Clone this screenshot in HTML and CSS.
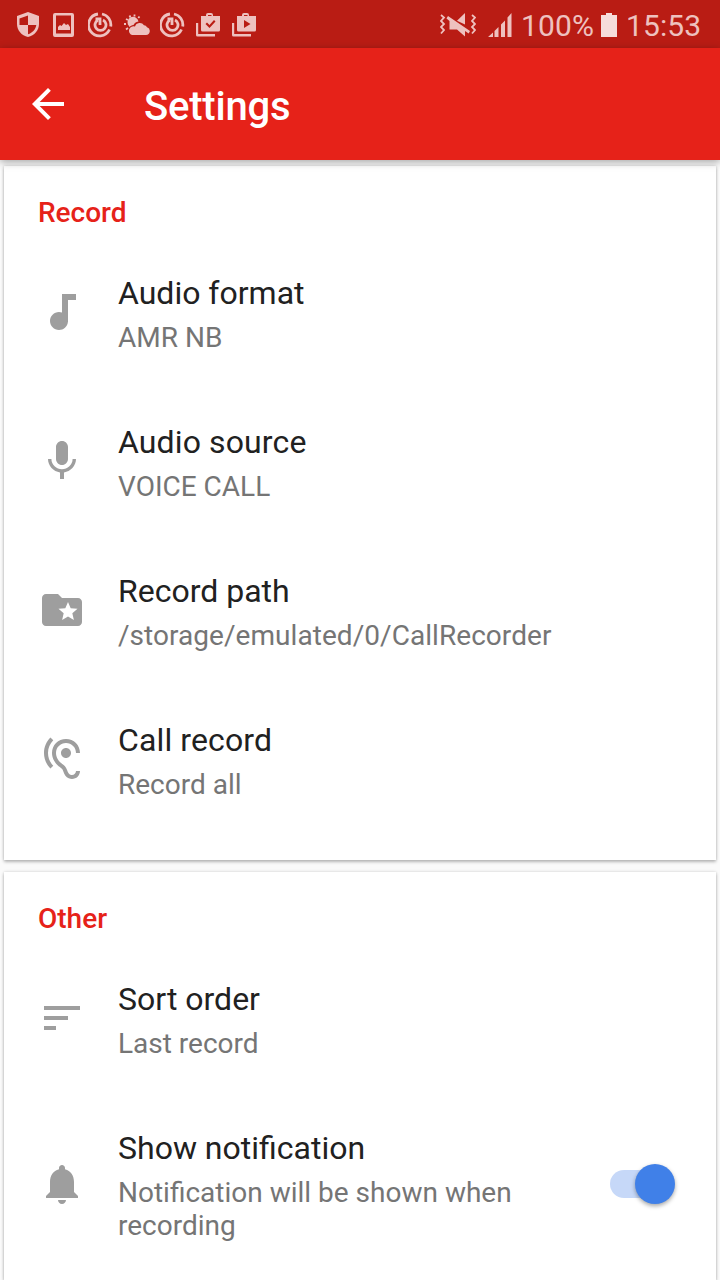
FILE: index.html
```html
<!DOCTYPE html>
<html lang="en">
<head>
<meta charset="utf-8">
<title>Settings</title>
<link rel="stylesheet" href="styles.css">
</head>
<body>
<div class="status">
  <div class="status-left">
    <svg width="26" height="28" viewBox="-1 0 26 28"><path fill-rule="evenodd" d="M11 1L22 5v8c0 6.300-4.500 11.500-11 13C4.500 24.500 0 19.300 0 13V5zM11 4.500L2.500 7.500V14H11zM11 14v9.300c4.500-1.400 7.700-5 8.300-9.300z"/></svg>
    <svg width="26" height="28" viewBox="0 0 26 28"><path fill-rule="evenodd" d="M3 2h17a2 2 0 0 1 2 2v20a2 2 0 0 1-2 2H3a2 2 0 0 1-2-2V4a2 2 0 0 1 2-2zM4 4.500v18h15v-18zM6 19v-3l2-2 1.500 1 2.500-3 2 2 2-1 2 3v3z"/></svg>
    <svg width="26" height="28" viewBox="1 0 26 28"><g class="line"><path d="M15 3a11 11 0 0 1 8.700 12.600M22.500 18.500A11 11 0 1 1 11 3M16 9a5.500 5.500 0 1 1-5 0"/><path d="M8.500 7.800h4.500v6.200"/></g></svg>
    <svg width="26" height="28" viewBox="1 0 26 28"><path d="M9 24h14a4 4 0 0 0 1-7.800 3.500 3.500 0 0 0-3-2A5 5 0 0 0 12 15.500 4.300 4.300 0 0 0 9 24z"/><path d="M6 15A5.500 5.500 0 1 1 15.500 10.500C12.500 11 11.500 12 10.500 14 8.500 14 7.500 15 6.500 16z"/><path class="ray" d="M3 8l2 1M6.500 4.500l1 2M11.500 3.500v2M16.500 5.500l-1.200 1.500M1 13h2M3 18.500l2-1.500"/></svg>
    <svg width="26" height="28" viewBox="1 0 26 28"><g class="line"><path d="M15 3a11 11 0 0 1 8.700 12.600M22.500 18.500A11 11 0 1 1 11 3M16 9a5.500 5.500 0 1 1-5 0"/><path d="M8.500 7.800h4.500v6.200"/></g></svg>
    <svg width="26" height="28" viewBox="0 -1 26 28"><path fill-rule="evenodd" d="M5 4h5V3a2 2 0 0 1 2-2h3a2 2 0 0 1 2 2v1h7v14a1.500 1.500 0 0 1-1.500 1.500h-16A1.500 1.500 0 0 1 5 18zM12 3v1h3.500V3zM11 10.500L9.500 12l4 4 6-6.500L18 8l-4.500 5z"/><path d="M0 11h2.200v11H19v2.500H1.500A1.500 1.500 0 0 1 0 23z"/></svg>
    <svg width="26" height="28" viewBox="0 -1 26 28"><path fill-rule="evenodd" d="M5 4h5V3a2 2 0 0 1 2-2h3a2 2 0 0 1 2 2v1h7v14a1.500 1.500 0 0 1-1.500 1.500h-16A1.500 1.500 0 0 1 5 18zM12 3v1h3.500V3zM12 8v8l6.500-4z"/><path d="M0 11h2.200v11H19v2.500H1.500A1.500 1.500 0 0 1 0 23z"/></svg>
  </div>
  <div class="status-right">
    <svg class="mute" width="36" height="26" viewBox="0 0 36 26"><path d="M25 1v11.500l-8-3.800zM8 4l22 15-1.300 2.500-3.700-2.500v5.500L17 17.500H9.500V9L6.500 6.500z"/><path class="wave" d="M1 3l3 2.500L1 9l3 3-3 3 3 3-3 3.500M32 3l3 2.500L32 9l3 3-3 3 3 3-3 3.500"/></svg>
    <svg class="signal" width="24" height="25" viewBox="0 0 24 25"><path d="M0 24l5-4.500V24zM6.500 18l4-4v10h-4zM13 11.500L17 7.500V24h-4zM19.500 4.500l4-4.500v24h-4z"/></svg>
    <span class="percent">100%</span>
    <svg class="battery" width="16" height="25" viewBox="0 0 16 25"><path d="M0 2h5V0h6v2h5v22H0z"/></svg>
    <span class="clock">15:53</span>
  </div>
</div>
<header class="appbar">
  <svg width="48" height="48" viewBox="0 0 24 24"><path d="M20 11H7.830l5.590-5.590L12 4l-8 8 8 8 1.410-1.410L7.830 13H20v-2z"/></svg>
  <h1>Settings</h1>
</header>
<main>
  <section class="card">
    <h2>Record</h2>
    <div class="row">
      <svg width="48" height="48" viewBox="0 0 24 24"><path d="M12 3v9.280c-.47-.17-.97-.28-1.500-.28C8.010 12 6 14.010 6 16.500S8.010 21 10.500 21c2.310 0 4.200-1.750 4.450-4H15V6h4V3h-7z"/></svg>
      <div class="text"><div class="title">Audio format</div><div class="sub">AMR NB</div></div>
    </div>
    <div class="row">
      <svg width="48" height="48" viewBox="0 0 24 24"><path d="M12 14c1.660 0 2.990-1.340 2.990-3L15 5c0-1.660-1.340-3-3-3S9 3.340 9 5v6c0 1.660 1.340 3 3 3zm5.300-3c0 3-2.540 5.100-5.300 5.100S6.700 14 6.700 11H5c0 3.410 2.720 6.230 6 6.720V21h2v-3.280c3.280-.48 6-3.300 6-6.720h-1.700z"/></svg>
      <div class="text"><div class="title wide">Audio source</div><div class="sub">VOICE CALL</div></div>
    </div>
    <div class="row">
      <svg width="48" height="48" viewBox="0 0 24 24"><path d="M20 6h-8l-2-2H4c-1.100 0-2 .9-2 2v12c0 1.100.9 2 2 2h16c1.100 0 2-.9 2-2V8c0-1.100-.9-2-2-2zm-2.060 11L15 15.280 12.060 17l.78-3.330-2.590-2.240 3.410-.29L15 8l1.340 3.140 3.410.29-2.590 2.240.78 3.330z"/></svg>
      <div class="text"><div class="title">Record path</div><div class="sub path">/storage/emulated/0/CallRecorder</div></div>
    </div>
    <div class="row">
      <svg width="48" height="48" viewBox="0 0 24 24"><path d="M17 20c-.29 0-.56-.06-.76-.15-.71-.37-1.210-.88-1.710-2.380-.51-1.560-1.470-2.290-2.390-3-.79-.61-1.610-1.240-2.320-2.530C9.290 10.980 9 9.930 9 9c0-2.800 2.200-5 5-5s5 2.200 5 5h2c0-3.930-3.070-7-7-7S7 5.070 7 9c0 1.260.38 2.650 1.070 3.900.91 1.650 1.980 2.480 2.850 3.150.81.62 1.390 1.070 1.710 2.050.6 1.820 1.370 2.840 2.730 3.550.51.23 1.070.35 1.640.35 2.210 0 4-1.790 4-4h-2c0 1.100-.9 2-2 2zM7.640 2.640L6.220 1.220C4.230 3.210 3 5.960 3 9s1.230 5.790 3.220 7.780l1.410-1.410C6.010 13.740 5 11.490 5 9s1.010-4.740 2.640-6.360zM11.500 9c0 1.380 1.120 2.500 2.500 2.500s2.500-1.120 2.500-2.500-1.120-2.500-2.500-2.500-2.500 1.120-2.500 2.500z"/></svg>
      <div class="text"><div class="title wide">Call record</div><div class="sub">Record all</div></div>
    </div>
  </section>
  <section class="card last">
    <h2>Other</h2>
    <div class="row">
      <svg width="48" height="48" viewBox="0 0 24 24"><path d="M3 18h6v-2H3v2zM3 6v2h18V6H3zm0 7h12v-2H3v2z"/></svg>
      <div class="text"><div class="title">Sort order</div><div class="sub">Last record</div></div>
    </div>
    <div class="row tall">
      <svg width="48" height="48" viewBox="0 0 24 24"><path d="M12 22c1.100 0 2-.9 2-2h-4c0 1.100.89 2 2 2zm6-6v-5c0-3.070-1.640-5.640-4.500-6.320V4c0-.83-.67-1.500-1.500-1.500s-1.500.67-1.500 1.500v.68C7.630 5.360 6 7.920 6 11v5l-2 2v1h16v-1l-2-2z"/></svg>
      <div class="text"><div class="title">Show notification</div><div class="sub">Notification will be shown when recording</div></div>
      <div class="switch"><div class="thumb"></div></div>
    </div>
  </section>
</main>
</body>
</html>
```
FILE: styles.css
```css
* { box-sizing: border-box; }
body {
  margin: 0;
  height: 1280px;
  overflow: hidden;
  display: flex;
  flex-direction: column;
  background: #fafafa;
  font-family: Roboto, "Liberation Sans", sans-serif;
}
svg { display: block; flex: none; }
.status {
  flex: none;
  height: 48px;
  padding: 0 18px 0 16px;
  display: flex;
  justify-content: space-between;
  background: #b91c14;
  color: #eec1bf;
  fill: #eec1bf;
}
.status-left { display: flex; gap: 10px; padding-top: 11px; }
.line { fill: none; stroke: #eec1bf; stroke-width: 2.800; }
.ray { fill: none; stroke: #eec1bf; stroke-width: 1.800; }
.status-right { display: flex; align-items: flex-start; font-size: 30px; line-height: 36px; }
.mute { margin: 12px 12px 0 0; }
.wave { fill: none; stroke: #eec1bf; stroke-width: 1.800; }
.signal { margin: 13px 9px 0 0; }
.battery { margin: 13px 9px 0 6px; fill: #f6dcdb; }
.percent, .clock { padding-top: 8px; }
.percent { width: 74px; letter-spacing: .1px; }
.clock { width: 76px; letter-spacing: .1px; }
.appbar {
  position: relative;
  flex: none;
  height: 112px;
  padding: 0 24px;
  display: flex;
  align-items: center;
  gap: 72px;
  background: #e62219;
  color: #fff;
  fill: #fff;
  box-shadow: 0 2px 8px rgba(0, 0, 0, .35);
}
h1 { margin: 6px 0 0; font-size: 40px; line-height: 48px; font-weight: 500; letter-spacing: -.2px; }
main { flex: 1; min-height: 0; padding: 6px 4px 0; display: flex; flex-direction: column; gap: 12px; }
.card {
  flex: none;
  height: 694px;
  background: #fff;
  box-shadow: 0 2px 3px rgba(0, 0, 0, .24), 0 0 3px rgba(0, 0, 0, .16);
}
.last { flex: 1; height: auto; min-height: 0; overflow: hidden; }
h2 {
  margin: 0;
  height: 71px;
  padding: 30px 34px 0;
  font-size: 28px;
  line-height: 33px;
  font-weight: 500;
  color: #e62219;
}
.row {
  height: 149px;
  padding: 0 41px 0 34px;
  display: flex;
  align-items: center;
  gap: 32px;
  fill: #9e9e9e;
}
.tall { height: 184px; }
.text { flex: 1; padding-top: 4px; }
.tall .text { padding-top: 2px; }
.title { font-size: 32px; line-height: 38px; color: #212121; }
.wide { letter-spacing: .12px; }
.sub { margin-top: 9px; font-size: 28px; line-height: 33px; color: #757575; }
.path { letter-spacing: .05px; }
.switch {
  width: 65px;
  height: 28px;
  margin-left: 32px;
  display: flex;
  align-items: center;
  justify-content: flex-end;
  border-radius: 14px;
  background: linear-gradient(to right, #c6d8f8 45px, transparent 45px);
}
.thumb {
  width: 40px;
  height: 40px;
  flex: none;
  border-radius: 50%;
  background: #4080e8;
  box-shadow: 0 2px 4px rgba(0, 0, 0, .35);
}
```
